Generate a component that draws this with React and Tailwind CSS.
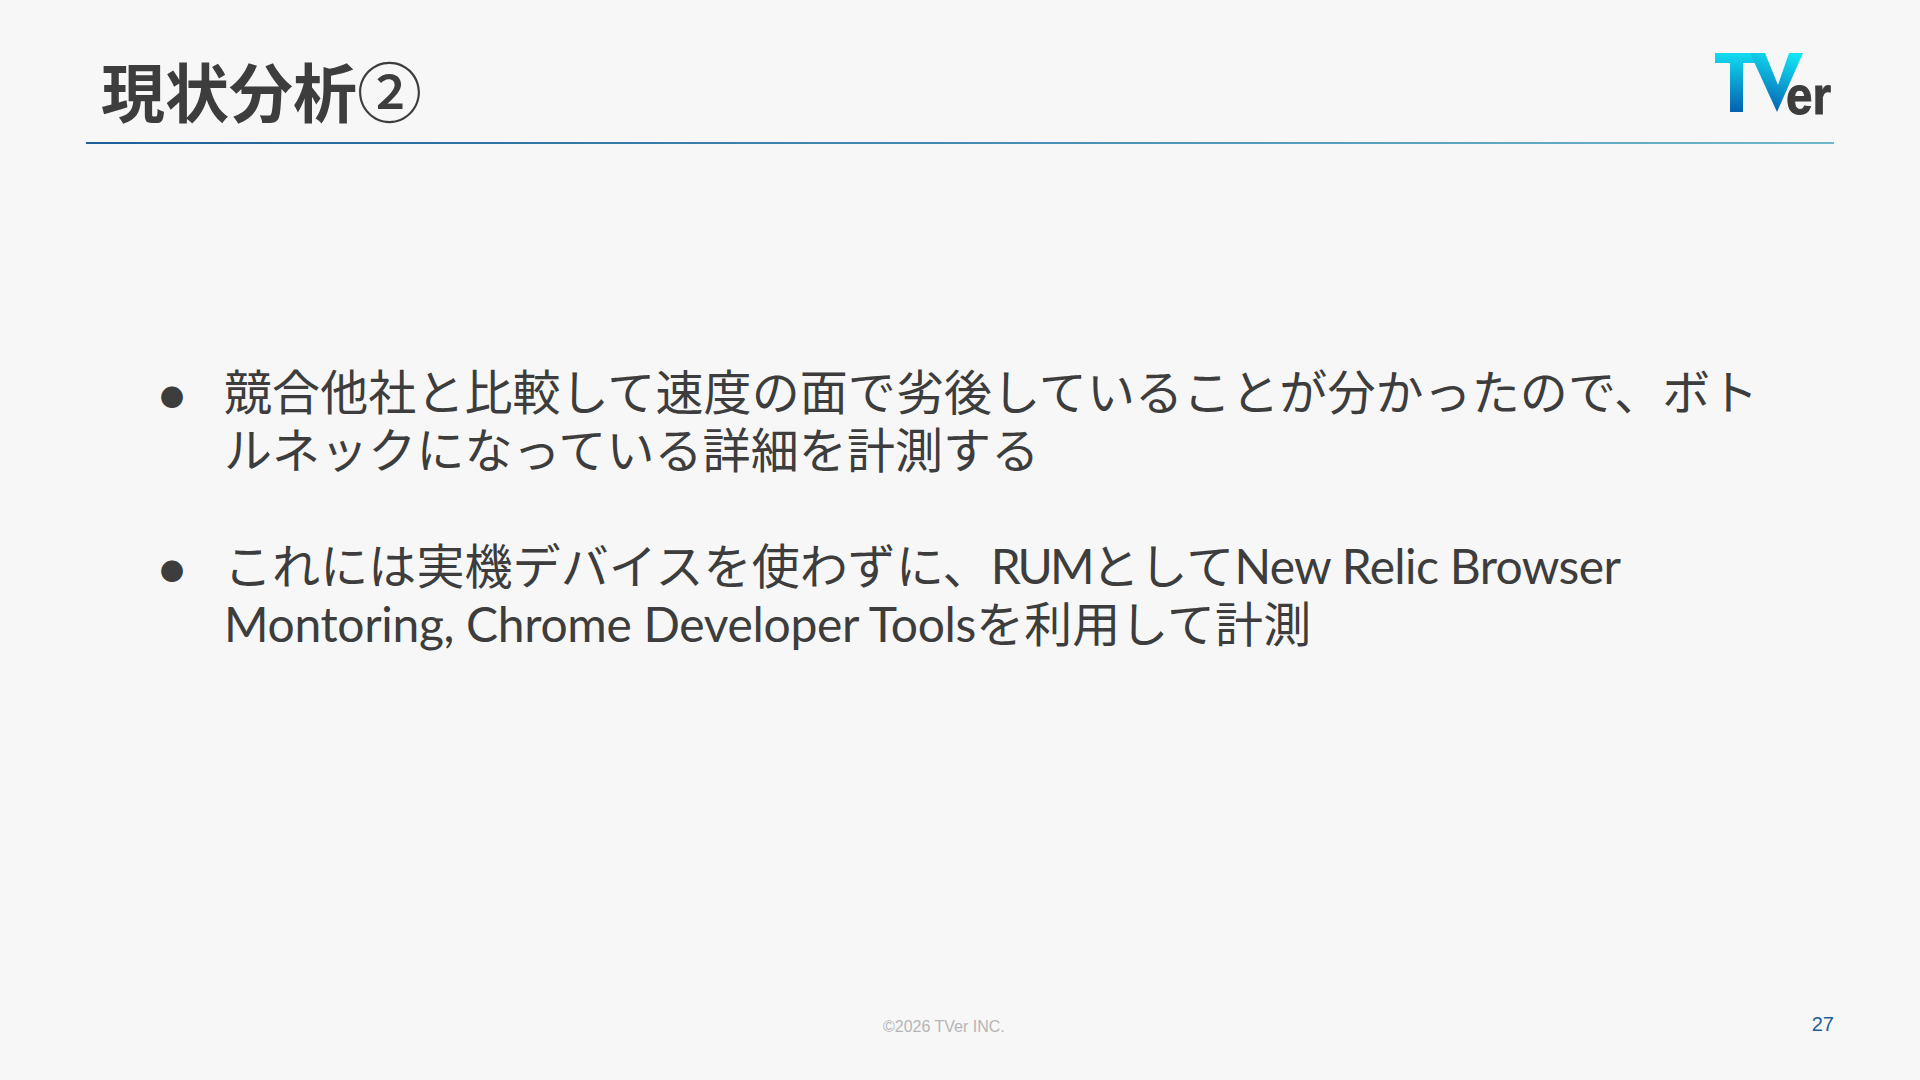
function Logo() {
  return (
    <svg width="118" height="66" viewBox="0 0 118 66" className="block overflow-visible">
      <defs>
        <linearGradient id="t" x1="0" y1="0" x2="0" y2="1">
          <stop offset="0" stopColor="#12dcf0" />
          <stop offset="1" stopColor="#0560b0" />
        </linearGradient>
        <linearGradient id="v" x1="0.7" y1="0" x2="0.4" y2="1">
          <stop offset="0" stopColor="#12e4f4" />
          <stop offset="1" stopColor="#0560b0" />
        </linearGradient>
      </defs>
      <path d="M0 0H46V10H28V59H15V10H0Z" fill="url(#t)" />
      <path d="M35 0H50L63 32L74 0H88L62 59Z" fill="url(#v)" />
      <text x="71" y="61" fontFamily="'Liberation Sans',sans-serif" fontWeight="700" fontSize="54" fill="#3d3d3d" stroke="#3d3d3d" strokeWidth="1" textLength="45" lengthAdjust="spacingAndGlyphs">er</text>
    </svg>
  );
}

export default function App() {
  return (
    <div className="w-[1920px] h-[1080px] bg-[#f7f7f7] overflow-hidden flex flex-col text-[#3d3d3d] font-['Lato','Noto_Sans_CJK_JP',sans-serif]">
      <header className="mt-[48px] mx-[86px] h-[95px] shrink-0">
        <div className="flex justify-between items-start h-[94px]">
          <h1 className="ml-[15px] mt-[1px] text-[64px] leading-[80px] font-bold font-['Noto_Sans_CJK_JP',sans-serif] flex items-center">
            現状分析<span className="text-[65px] leading-[80px] font-medium">②</span>
          </h1>
          <div className="mt-[5px] mr-[1px]"><Logo /></div>
        </div>
        <div className="h-[2px] bg-gradient-to-r from-[#1f5f99] to-[#6fb7c9]" />
      </header>
      <ul className="mt-[220px] ml-[160px] w-[1610px] text-[48px] leading-[58px] flex flex-col gap-[58px]">
        <li className="flex">
          <span className="w-[64px] shrink-0 text-[24px] font-['Noto_Sans_CJK_JP',sans-serif] leading-[66px]">●</span>
          <span className="w-[1546px] tracking-[0.1px]">競合他社と比較して速度の面で劣後していることが分かったので、ボトルネックになっている詳細を計測する</span>
        </li>
        <li className="flex">
          <span className="w-[64px] shrink-0 text-[24px] font-['Noto_Sans_CJK_JP',sans-serif] leading-[66px]">●</span>
          <span className="w-[1546px] tracking-[0.1px]">これには実機デバイスを使わずに、<span className="tracking-[-3px]">RUM</span>として<span className="tracking-[-0.65px]">New Relic Browser</span> <span className="tracking-[-0.33px]">Montoring, Chrome Developer Tools</span>を利用して計測</span>
        </li>
      </ul>
      <footer className="mt-auto mb-[43px] mx-[86px] flex items-center h-[20px] font-['Liberation_Sans',sans-serif]">
        <span className="ml-[797px] text-[16px] text-[#b5b5b5]">©2026 TVer INC.</span>
        <span className="ml-auto mb-[6px] text-[20px] text-[#1f5f99]">27</span>
      </footer>
    </div>
  );
}
